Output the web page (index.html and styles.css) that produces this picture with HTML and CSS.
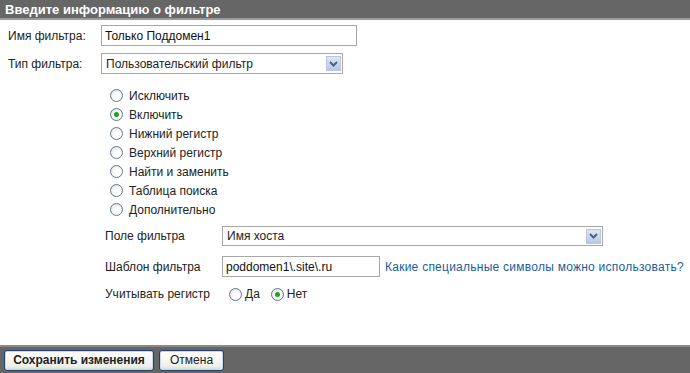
FILE: index.html
```html
<!DOCTYPE html>
<html lang="ru">
<head>
    <meta charset="UTF-8">
    <title>Фильтр</title>
    <link rel="stylesheet" href="styles.css">
</head>
<body>
    <div class="page">
        <div class="title-bar">Введите информацию о фильтре</div>

        <div class="form">
            <div class="row">
                <span class="label">Имя фильтра:</span>
                <input class="text name-input" type="text" value="Только Поддомен1">
            </div>
            <div class="row">
                <span class="label">Тип фильтра:</span>
                <div class="select type-select">
                    <span class="select-value">Пользовательский фильтр</span>
                    <span class="select-arrow">
                        <svg width="9" height="6" viewBox="0 0 9 6"><path d="M1 1 L4.5 4.5 L8 1" fill="none" stroke="#4d6185" stroke-width="2"/></svg>
                    </span>
                </div>
            </div>

            <div class="radios">
                <label class="radio-row"><span class="radio"></span>Исключить</label>
                <label class="radio-row"><span class="radio checked"></span>Включить</label>
                <label class="radio-row"><span class="radio"></span>Нижний регистр</label>
                <label class="radio-row"><span class="radio"></span>Верхний регистр</label>
                <label class="radio-row"><span class="radio"></span>Найти и заменить</label>
                <label class="radio-row"><span class="radio"></span>Таблица поиска</label>
                <label class="radio-row"><span class="radio"></span>Дополнительно</label>
            </div>

            <div class="details">
                <div class="row">
                    <span class="label wide">Поле фильтра</span>
                    <div class="select field-select">
                        <span class="select-value">Имя хоста</span>
                        <span class="select-arrow">
                            <svg width="9" height="6" viewBox="0 0 9 6"><path d="M1 1 L4.5 4.5 L8 1" fill="none" stroke="#4d6185" stroke-width="2"/></svg>
                        </span>
                    </div>
                </div>
                <div class="row pattern-row">
                    <span class="label wide">Шаблон фильтра</span>
                    <input class="text pattern-input" type="text" value="poddomen1\.site\.ru">
                    <a class="help-link" href="#">Какие специальные символы можно использовать?</a>
                </div>
                <div class="row case-row">
                    <span class="label wide">Учитывать регистр</span>
                    <label class="inline-radio"><span class="radio"></span>Да</label>
                    <label class="inline-radio"><span class="radio checked"></span>Нет</label>
                </div>
            </div>
        </div>

        <div class="footer-bar">
            <button class="btn primary" type="button">Сохранить изменения</button>
            <button class="btn" type="button">Отмена</button>
        </div>
    </div>
</body>
</html>
```

FILE: styles.css
```css
body {
    margin: 0;
    font-family: 'Liberation Sans', Arial, sans-serif;
    font-size: 12px;
    color: #222;
    background-color: #fff;
}

.page {
    display: flex;
    flex-direction: column;
    height: 373px;
    width: 690px;
}

.title-bar {
    background-color: #666;
    border-bottom: 2px solid #9a9a9a;
    color: #fff;
    font-weight: bold;
    font-size: 13px;
    height: 18px;
    line-height: 19px;
    padding-left: 5px;
}

.form {
    padding: 5px 0 0 8px;
}

.row {
    display: flex;
    align-items: center;
    margin-bottom: 7px;
}

.label {
    width: 93px;
    color: #222;
}

.label.wide {
    width: 117px;
}

.text {
    font-family: 'Liberation Sans', Arial, sans-serif;
    font-size: 12px;
    color: #111;
    border: 1px solid #a7a7a7;
    height: 21px;
    box-sizing: border-box;
    padding: 0 3px;
    margin: 0;
    outline: none;
}

.name-input {
    width: 256px;
}

.select {
    display: flex;
    align-items: center;
    justify-content: space-between;
    border: 1px solid #a7a7a7;
    height: 21px;
    box-sizing: border-box;
    padding-left: 4px;
}

.type-select {
    width: 242px;
}

.field-select {
    width: 381px;
    height: 20px;
}

.select-arrow {
    display: flex;
    align-items: center;
    justify-content: center;
    width: 15px;
    height: 15px;
    margin-right: 1px;
    border: 1px solid #b9c6dc;
    background: linear-gradient(#dde6f6, #b7c8e6);
    box-sizing: border-box;
}

.radios {
    display: flex;
    flex-direction: column;
    padding-left: 102px;
    margin-top: 12px;
    margin-bottom: 7px;
}

.radio-row {
    display: flex;
    align-items: center;
    height: 19px;
}

.radio {
    display: inline-block;
    position: relative;
    width: 11px;
    height: 11px;
    border: 1px solid #5c7799;
    border-radius: 50%;
    background: radial-gradient(circle at 60% 65%, #fff 30%, #dcdcd6 100%);
    margin-right: 6px;
}

.radio.checked::after {
    content: '';
    position: absolute;
    left: 3px;
    top: 3px;
    width: 5px;
    height: 5px;
    border-radius: 50%;
    background-color: #21a121;
}

.details {
    padding-left: 97px;
}

.pattern-row {
    margin-top: 10px;
    margin-bottom: 10px;
}

.pattern-input {
    width: 158px;
    margin-right: 5px;
}

.help-link {
    color: #1a5d9c;
    text-decoration: none;
    letter-spacing: 0.25px;
}

.inline-radio {
    display: flex;
    align-items: center;
    margin-right: 11px;
}

.inline-radio .radio {
    margin-right: 3px;
}

.inline-radio:first-of-type {
    margin-left: 7px;
}

.footer-bar {
    margin-top: auto;
    background-color: #666;
    border-top: 2px solid #8a8a8a;
    height: 26px;
    display: flex;
    align-items: center;
    padding-left: 4px;
    gap: 5px;
}

.btn {
    font-family: 'Liberation Sans', Arial, sans-serif;
    font-size: 12px;
    color: #222;
    height: 21px;
    padding: 0 10px;
    border: 1px solid #22426e;
    border-radius: 3px;
    background: linear-gradient(#fff, #f0f0ea 80%, #d8d8d0);
    box-shadow: inset 0 0 0 1px #c8d8f0;
    cursor: pointer;
}

.btn.primary {
    font-weight: bold;
    width: 150px;
    padding: 0;
}
```
